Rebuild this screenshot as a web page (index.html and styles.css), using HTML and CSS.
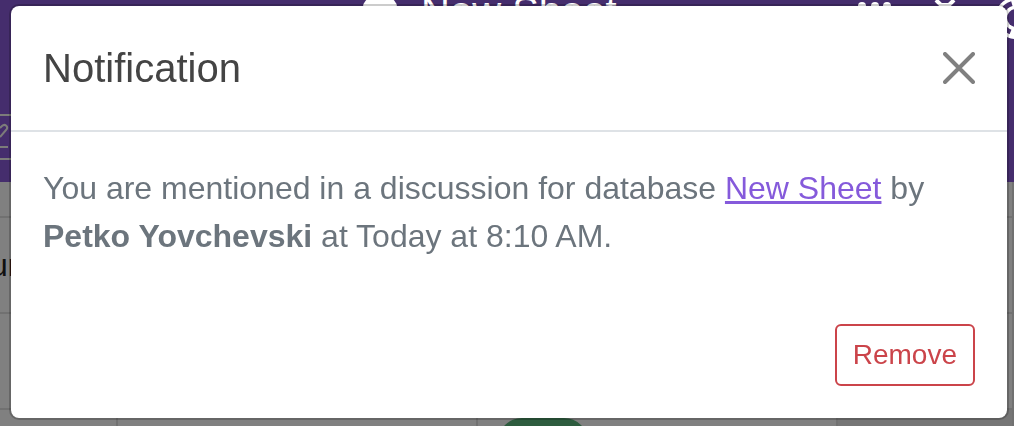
FILE: index.html
```html
<!DOCTYPE html>
<html lang="en">
<head>
    <meta charset="UTF-8">
    <meta name="viewport" content="width=device-width, initial-scale=1.0">
    <title>New Sheet</title>
    <link rel="stylesheet" href="styles.css">
</head>
<body>
    <header class="page-header">
        <div class="topbar">
            <svg class="sheet-icon" width="36" height="36" viewBox="0 0 36 36"><rect x="1" y="5" width="34" height="26" rx="9" fill="#fff"/></svg>
            <h1>New Sheet</h1>
            <div class="topbar-icons">
                <svg width="34" height="34" viewBox="0 0 34 34" fill="#fff"><circle cx="4" cy="12" r="4"/><circle cx="17" cy="12" r="4"/><circle cx="29" cy="12" r="4"/><circle cx="4" cy="25" r="4"/><circle cx="17" cy="25" r="4"/><circle cx="29" cy="25" r="4"/></svg>
                <svg width="20" height="34" viewBox="0 0 20 34" fill="none" stroke="#fff" stroke-width="4"><path d="M3 6l5 5h8l5-5M8 11v14h8V11"/></svg>
                <svg width="44" height="58" viewBox="0 0 44 58"><circle cx="22" cy="36" r="21" fill="#fff"/><circle cx="22" cy="36" r="15" fill="none" stroke="#452d6d" stroke-width="5" stroke-dasharray="13 11" stroke-dashoffset="-29"/><circle cx="22" cy="36" r="9" fill="#452d6d"/></svg>
            </div>
        </div>
        <div class="toolbar">
            <svg width="10" height="34" viewBox="0 0 10 34" fill="none" stroke="#7c7c7a" stroke-width="2"><path d="M0 12l2-2c3-3 7 1 4 4l-6 7"/><path d="M0 31h8"/></svg>
        </div>
    </header>
    <table class="sheet">
        <colgroup><col class="col-name"><col class="col-wide"><col class="col-wide"><col></colgroup>
        <tbody>
            <tr class="spacer"><td colspan="4"></td></tr>
            <tr><td colspan="4">ur</td></tr>
            <tr><td></td><td></td><td></td><td></td></tr>
            <tr><td></td><td></td><td><span class="status"></span></td><td class="empty"></td></tr>
        </tbody>
    </table>

    <div class="overlay">
        <div class="modal" role="dialog" aria-labelledby="modalTitle">
            <div class="modal-header">
                <h2 id="modalTitle">Notification</h2>
                <button type="button" class="close-button" aria-label="Close">
                    <svg width="32" height="32" viewBox="0 0 32 32" fill="none" stroke="#808080" stroke-width="4" stroke-linecap="round"><path d="M2 2l28 28M30 2L2 30"/></svg>
                </button>
            </div>
            <div class="modal-body">
                <p>You are mentioned in a discussion for database <a href="#">New Sheet</a> by <strong>Petko Yovchevski</strong> at Today at 8:10 AM.</p>
            </div>
            <div class="modal-footer">
                <button type="button" class="remove-button">Remove</button>
            </div>
        </div>
    </div>
</body>
</html>
```
FILE: styles.css
```css
* {
    box-sizing: border-box;
}

body {
    margin: 0;
    height: 100vh;
    overflow: hidden;
    background-color: #808080;
    font-family: "Liberation Sans", Arial, sans-serif;
}

/* page behind the dialog */
.page-header {
    height: 182px;
    background-color: #452d6d;
}

.topbar {
    display: flex;
    align-items: center;
    height: 22px;
    margin-bottom: 92px;
    padding-left: 362px;
    color: #fff;
}

.topbar svg {
    flex: none;
    overflow: visible;
}

.topbar h1 {
    margin: 0 0 0 23px;
    font-size: 40px;
    font-weight: 400;
    line-height: 48px;
    white-space: nowrap;
}

.topbar-icons {
    display: flex;
    align-items: center;
    gap: 41px;
    margin-left: auto;
    margin-right: -24px;
}

.toolbar {
    width: 50%;
    height: 46px;
    border-top: 2px solid #7c7c7a;
    border-bottom: 2px solid #7c7c7a;
}

.sheet {
    width: 100%;
    table-layout: fixed;
    border-collapse: collapse;
    font-size: 32px;
    color: #111;
}

.col-name {
    width: 117px;
}

.col-wide {
    width: 360px;
}

.sheet td {
    height: 96px;
    padding: 0;
    border-right: 2px solid #717171;
    border-bottom: 2px solid #717171;
}

.sheet td:first-child {
    text-indent: -10px;
}

.sheet .spacer td {
    height: 35px;
}

.sheet .empty {
    background-color: #767676;
}

.status {
    display: block;
    width: 90px;
    height: 78px;
    margin-left: 20px;
    border-radius: 24px;
    background-color: #2d5c3e;
}

/* dialog */
.overlay {
    position: fixed;
    inset: 0;
    padding: 4px 5px 6px 9px;
}

.modal {
    border: 2px solid rgba(0, 0, 0, 0.2);
    border-radius: 10px;
    background-color: #fff;
    background-clip: padding-box;
}

.modal-header {
    display: flex;
    justify-content: space-between;
    align-items: center;
    padding: 32px;
    border-bottom: 2px solid #dee2e6;
}

.modal-header h2 {
    margin: 0;
    font-size: 40px;
    font-weight: 400;
    line-height: 60px;
    color: #444;
}

.close-button {
    display: flex;
    padding: 0;
    border: none;
    background: none;
    cursor: pointer;
}

.modal-body {
    padding: 32px;
}

.modal-body p {
    margin: 0;
    font-size: 32px;
    line-height: 48px;
    color: #6c757d;
}

.modal-body a {
    color: #855adb;
}

.modal-footer {
    display: flex;
    justify-content: flex-end;
    padding: 32px;
}

.remove-button {
    padding: 8px 16px;
    border: 2px solid #cb444a;
    border-radius: 6px;
    background: none;
    font-family: inherit;
    font-size: 28px;
    line-height: 42px;
    color: #cb444a;
    cursor: pointer;
}
```
